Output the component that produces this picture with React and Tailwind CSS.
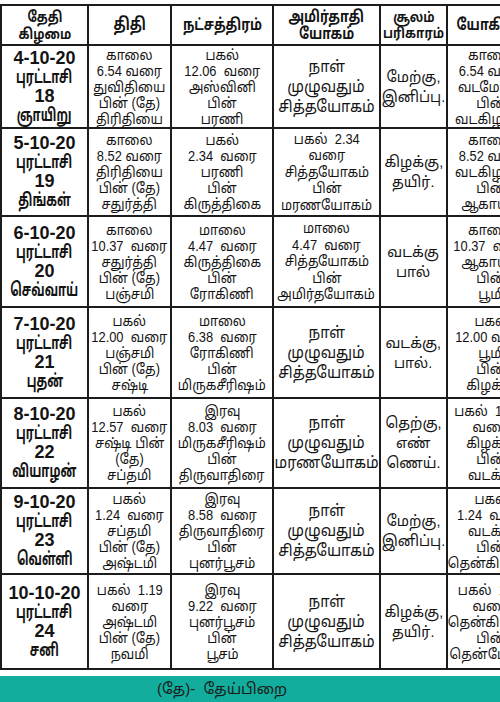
import React from "react";

const FONT = { fontFamily: '"Liberation Sans", "Noto Sans Tamil", "Noto Sans", sans-serif' };

const rows = [
  {
    h: "h-[83px]",
    date: ["4-10-20", "புரட்டாசி", "18", "ஞாயிறு"],
    thithi: ["காலை", "6.54 வரை", "துவிதியை", "பின் (தே)", "திரிதியை"],
    star: ["பகல்", "12.06  வரை", "அஸ்வினி", "பின்", "பரணி"],
    amirtha: ["நாள்", "முழுவதும்", "சித்தயோகம்"],
    big: true,
    soolam: ["மேற்கு,", "இனிப்பு."],
    yogini: ["காலை", "6.54 வரை", "வடமேற்கு", "பின்", "வடகிழக்கு"],
  },
  {
    h: "h-[88px]",
    date: ["5-10-20", "புரட்டாசி", "19", "திங்கள்"],
    thithi: ["காலை", "8.52 வரை", "திரிதியை", "பின் (தே)", "சதுர்த்தி"],
    star: ["பகல்", "2.34  வரை", "பரணி", "பின்", "கிருத்திகை"],
    amirtha: ["பகல்  2.34", "வரை", "சித்தயோகம்", "பின்", "மரணயோகம்"],
    big: false,
    soolam: ["கிழக்கு,", "தயிர்."],
    yogini: ["காலை", "8.52 வரை", "வடகிழக்கு", "பின்", "ஆகாயம்"],
  },
  {
    h: "h-[91px]",
    date: ["6-10-20", "புரட்டாசி", "20", "செவ்வாய்"],
    thithi: ["காலை", "10.37  வரை", "சதுர்த்தி", "பின் (தே)", "பஞ்சமி"],
    star: ["மாலை", "4.47  வரை", "கிருத்திகை", "பின்", "ரோகிணி"],
    amirtha: ["மாலை", "4.47  வரை", "சித்தயோகம்", "பின்", "அமிர்தயோகம்"],
    big: false,
    soolam: ["வடக்கு", "பால்"],
    yogini: ["காலை", "10.37  வரை", "ஆகாயம்", "பின்", "பூமி"],
  },
  {
    h: "h-[91px]",
    date: ["7-10-20", "புரட்டாசி", "21", "புதன்"],
    thithi: ["பகல்", "12.00  வரை", "பஞ்சமி", "பின் (தே)", "சஷ்டி"],
    star: ["மாலை", "6.38  வரை", "ரோகிணி", "பின்", "மிருகசீரிஷம்"],
    amirtha: ["நாள்", "முழுவதும்", "சித்தயோகம்"],
    big: true,
    soolam: ["வடக்கு,", "பால்."],
    yogini: ["பகல்", "12.00 வரை", "பூமி", "பின்", "கிழக்கு"],
  },
  {
    h: "h-[90px]",
    date: ["8-10-20", "புரட்டாசி", "22", "வியாழன்"],
    thithi: ["பகல்", "12.57  வரை", "சஷ்டி பின்", "(தே)", "சப்தமி"],
    star: ["இரவு", "8.03  வரை", "மிருகசீரிஷம்", "பின்", "திருவாதிரை"],
    amirtha: ["நாள்", "முழுவதும்", "மரணயோகம்"],
    big: true,
    soolam: ["தெற்கு,", "எண்", "ணெய்."],
    yogini: ["பகல்  12.57", "வரை", "கிழக்கு", "பின்", "வடக்கு"],
  },
  {
    h: "h-[86px]",
    date: ["9-10-20", "புரட்டாசி", "23", "வெள்ளி"],
    thithi: ["பகல்", "1.24  வரை", "சப்தமி", "பின் (தே)", "அஷ்டமி"],
    star: ["இரவு", "8.58  வரை", "திருவாதிரை", "பின்", "புனர்பூசம்"],
    amirtha: ["நாள்", "முழுவதும்", "சித்தயோகம்"],
    big: true,
    soolam: ["மேற்கு,", "இனிப்பு."],
    yogini: ["பகல்", "1.24  வரை", "வடக்கு", "பின்", "தென்கிழக்கு"],
  },
  {
    h: "h-[95px]",
    date: ["10-10-20", "புரட்டாசி", "24", "சனி"],
    thithi: ["பகல்  1.19", "வரை", "அஷ்டமி", "பின் (தே)", "நவமி"],
    star: ["இரவு", "9.22  வரை", "புனர்பூசம்", "பின்", "பூசம்"],
    amirtha: ["நாள்", "முழுவதும்", "சித்தயோகம்"],
    big: true,
    soolam: ["கிழக்கு,", "தயிர்."],
    yogini: ["பகல்  1.19", "வரை", "தென்கிழக்கு", "பின்", "தென்மேற்கு"],
  },
];

function Cell({ lines, w, cls, lineCls }) {
  return (
    <div
      className={`${w} shrink-0 flex flex-col items-center justify-center text-center border-r-2 border-[#1c1c1c] whitespace-pre ${cls}`}
    >
      {lines.map((l, i) => (
        <div key={i} className={lineCls ? lineCls(i) : ""}>
          {l}
        </div>
      ))}
    </div>
  );
}

const W = ["w-[87px]", "w-[83px]", "w-[102px]", "w-[107px]", "w-[67px]", "w-[88px]"];

const reg = () => "scale-x-[0.92]";
const hdr = () => "scale-x-[0.8]";
const dateLine = (i) =>
  i % 2 === 1 ? "text-[18px] scale-x-[0.65]" : "text-[18px]";

export default function App() {
  return (
    <div className="w-[500px] h-[702px] overflow-hidden bg-white flex flex-col text-[#141414]" style={FONT}>
      <div className="h-[4px] shrink-0" />
      <div className="w-[536px] flex flex-col border-t-2 border-l-2 border-[#1c1c1c] shrink-0">
        <div className="flex h-[40px] border-b-2 border-[#1c1c1c] font-bold">
          <Cell w={W[0]} lines={["தேதி", "கிழமை"]} cls="text-[15px] leading-[17px]" lineCls={hdr} />
          <Cell w={W[1]} lines={["திதி"]} cls="text-[17px] leading-[18px]" lineCls={() => "scale-x-[0.78]"} />
          <Cell w={W[2]} lines={["நட்சத்திரம்"]} cls="text-[16px] leading-[18px]" lineCls={hdr} />
          <Cell w={W[3]} lines={["அமிர்தாதி", "யோகம்"]} cls="text-[16px] leading-[17px]" lineCls={hdr} />
          <Cell w={W[4]} lines={["சூலம்", "பரிகாரம்"]} cls="text-[14px] leading-[16px]" lineCls={() => "scale-x-[0.86]"} />
          <Cell w={W[5]} lines={["யோகினி"]} cls="text-[16px] leading-[18px]" lineCls={hdr} />
        </div>
        {rows.map((r, i) => (
          <div key={i} className={`flex ${r.h} border-b-2 border-[#1c1c1c]`}>
            <Cell w={W[0]} lines={r.date} cls="font-bold leading-[19px]" lineCls={dateLine} />
            <Cell w={W[1]} lines={r.thithi} cls="text-[14px] leading-[16px]" lineCls={reg} />
            <Cell w={W[2]} lines={r.star} cls="text-[14px] leading-[16px]" lineCls={reg} />
            <Cell
              w={W[3]}
              lines={r.amirtha}
              cls={r.big ? "text-[16px] leading-[20px]" : "text-[14px] leading-[16.5px]"}
              lineCls={reg}
            />
            <Cell w={W[4]} lines={r.soolam} cls="text-[15px] leading-[20px]" lineCls={() => "scale-x-[0.95]"} />
            <Cell w={W[5]} lines={r.yogini} cls="text-[14px] leading-[16px]" lineCls={reg} />
          </div>
        ))}
      </div>
      <div className="mt-[6px] flex-1 bg-[#12ad9c] flex items-center pl-[157px] text-[15px] text-[#1a1a1a]">
        (தே)- &nbsp;தேய்பிறை
      </div>
    </div>
  );
}
